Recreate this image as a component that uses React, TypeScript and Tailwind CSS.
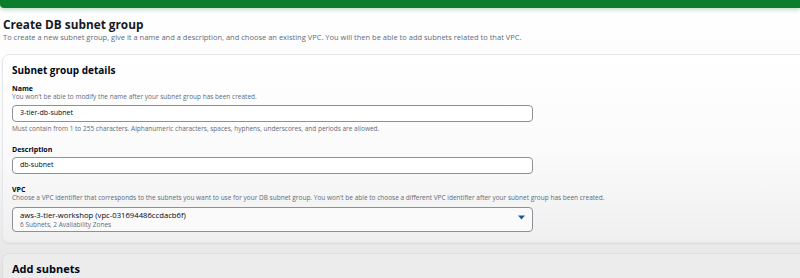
const font = { fontFamily: '"Open Sans", "Noto Sans", Arial, sans-serif' };

function Field({ label, hint, children, className = '' }: { label: string; hint?: string; children: React.ReactNode; className?: string }) {
  return (
    <div className={className}>
      <div className="text-[7px] leading-[9px] font-bold text-[#000716]">{label}</div>
      {hint && <div className="text-[6.5px] leading-[8px] text-[#5f6b7a]">{hint}</div>}
      {children}
    </div>
  );
}

export default function App() {
  return (
    <div
      style={font}
      className="w-[800px] h-[278px] overflow-hidden bg-gradient-to-b from-white via-[#fafafa] to-[#e4e4e4]"
    >
      {/* flash bar */}
      <div className="h-[8px] bg-[#0b7d2c] rounded-bl-[4px] shadow-[0_2px_4px_rgba(11,125,44,0.25)]" />

      {/* header */}
      <div className="px-[3px] mt-[9px]">
        <h1 className="text-[11.8px] leading-[14px] font-bold text-[#16191f]">Create DB subnet group</h1>
        <p className="mt-[1px] text-[7.5px] leading-[10px] text-[#5f6b7a]">
          To create a new subnet group, give it a name and a description, and choose an existing VPC. You will then be able to add subnets related to that VPC.
        </p>
      </div>

      {/* details card */}
      <div className="mt-[12px] ml-[2px] mr-[-12px] rounded-[7px] border border-[#e4e6e8] bg-gradient-to-b from-white via-[#fbfbfb] to-[#efefef] pl-[9px] pt-[9px] pb-[10px] shadow-[0_1px_2px_rgba(0,0,0,0.06)]">
        <h2 className="text-[10px] leading-[12px] font-bold text-[#000716]">Subnet group details</h2>

        <Field
          className="mt-[8px]"
          label="Name"
          hint="You won't be able to modify the name after your subnet group has been created."
        >
          <div className="mt-[4px] w-[521px] h-[17px] rounded-[4px] border border-[#8d9096] bg-white flex items-center px-[7px] text-[7px] text-[#000716]">
            3-tier-db-subnet
          </div>
          <div className="mt-[3px] text-[6.5px] leading-[8px] text-[#5f6b7a]">
            Must contain from 1 to 255 characters. Alphanumeric characters, spaces, hyphens, underscores, and periods are allowed.
          </div>
        </Field>

        <Field className="mt-[12px]" label="Description">
          <div className="mt-[3px] w-[521px] h-[17px] rounded-[4px] border border-[#8d9096] bg-white flex items-center px-[7px] text-[7px] text-[#000716]">
            db-subnet
          </div>
        </Field>

        <div className="mt-[12px]">
          <div className="text-[7px] leading-[8px] font-bold text-[#000716]">VPC</div>
          <div className="text-[6.5px] leading-[8px] text-[#5f6b7a]">
            Choose a VPC identifier that corresponds to the subnets you want to use for your DB subnet group. You won't be able to choose a different VPC identifier after your subnet group has been created.
          </div>
          <div className="mt-[5px] w-[521px] h-[25px] rounded-[4px] border border-[#8d9096] bg-[#fafafa] flex items-center justify-between pl-[7px] pr-[7px]">
            <div>
              <div className="text-[7.7px] leading-[10px] text-[#000716]">aws-3-tier-workshop (vpc-031694486ccdacb6f)</div>
              <div className="mt-[1px] text-[6.5px] leading-[8px] text-[#5f6b7a]">6 Subnets, 2 Availability Zones</div>
            </div>
            <svg width="7" height="5" viewBox="0 0 7 5" className="mt-[-4px]">
              <path d="M0 0.5 H7 L3.5 4.5 Z" fill="#0f5aa8" />
            </svg>
          </div>
        </div>
      </div>

      {/* add subnets card */}
      <div className="mt-[10px] ml-[2px] mr-[-12px] rounded-t-[7px] border border-b-0 border-[#dedede] bg-[#ececec] pl-[9px] pt-[9px] h-[40px]">
        <h2 className="text-[11px] leading-[12px] font-bold text-[#000716]">Add subnets</h2>
      </div>
    </div>
  );
}
